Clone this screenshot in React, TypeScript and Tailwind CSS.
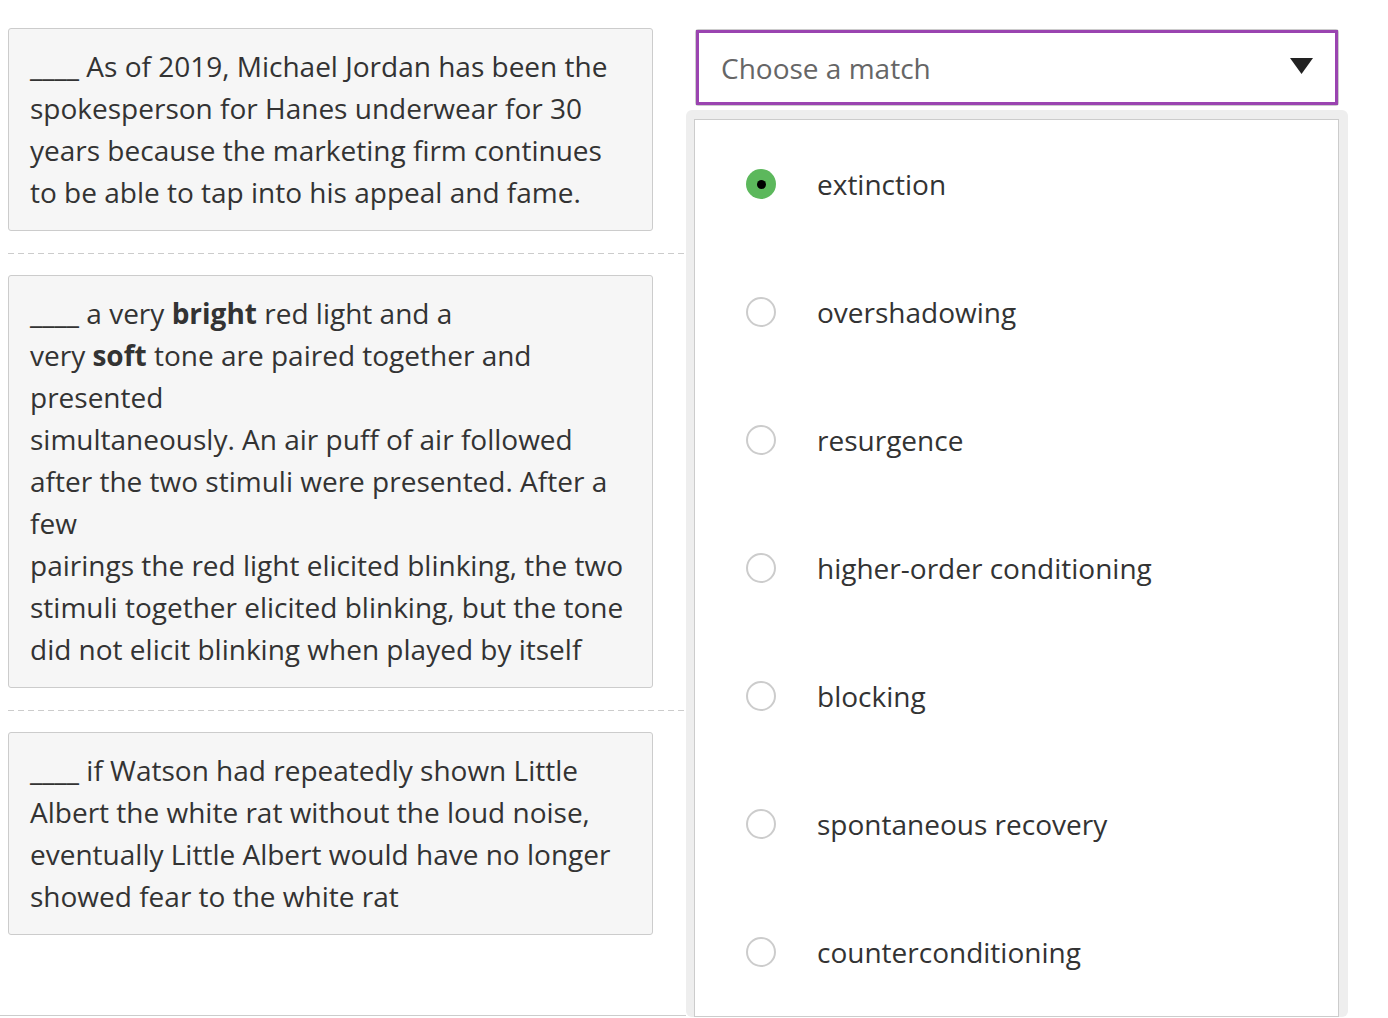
import React from "react"

const options = [
    "extinction",
    "overshadowing",
    "resurgence",
    "higher-order conditioning",
    "blocking",
    "spontaneous recovery",
    "counterconditioning",
]

function Card({ children }: { children: React.ReactNode }) {
    return (
        <div className="ml-2 w-[645px] whitespace-nowrap rounded-[3px] border border-[#cccccc] bg-[#f6f6f6] pl-[21px] pr-4 pt-[16px] pb-[17px] text-[28px] leading-[42px] text-[#333333]">
            {children}
        </div>
    )
}

function Divider() {
    return (
        <div className="ml-2 mt-[22px] mb-[21px] h-px w-[683px] bg-[linear-gradient(to_right,#cccccc_60%,transparent_60%)] bg-[length:10px_1px] bg-repeat-x" />
    )
}

export default function App() {
    return (
        <div className="h-screen overflow-hidden bg-white font-['Open_Sans',sans-serif] text-[#333333]">
            <div className="flex pt-[28px]">
                {/* left column: statements */}
                <div className="w-[686px] shrink-0">
                    <Card>
                        ____ As of 2019, Michael Jordan has been the
                        <br />
                        spokesperson for Hanes underwear for 30
                        <br />
                        years because the marketing firm continues
                        <br />
                        to be able to tap into his appeal and fame.
                    </Card>
                    <Divider />
                    <Card>
                        ____ a very <b className="font-bold">bright</b> red light and a
                        <br />
                        very <b className="font-bold">soft</b> tone are paired together and
                        <br />
                        presented
                        <br />
                        simultaneously. An air puff of air followed
                        <br />
                        after the two stimuli were presented. After a
                        <br />
                        few
                        <br />
                        pairings the red light elicited blinking, the two
                        <br />
                        stimuli together elicited blinking, but the tone
                        <br />
                        did not elicit blinking when played by itself
                    </Card>
                    <Divider />
                    <Card>
                        ____ if Watson had repeatedly shown Little
                        <br />
                        Albert the white rat without the loud noise,
                        <br />
                        eventually Little Albert would have no longer
                        <br />
                        showed fear to the white rat
                    </Card>
                    <div className="mt-[80px] h-px w-[686px] bg-[#cccccc]" />
                </div>

                {/* right column: select with open menu */}
                <div className="w-[662px] shrink-0">
                    <div className="ml-[9px] mt-px w-[644px] rounded-[3px] border border-[#cccccc]">
                        <div className="flex h-[75px] items-center justify-between border-[3px] border-[#9a44b0] pl-[22px] pr-[22px]">
                            <span className="text-[28px] text-[#666666]">Choose a match</span>
                            <svg width="23" height="16" viewBox="0 0 23 16" className="mb-[4px]">
                                <polygon points="0,0 23,0 11.5,16" fill="#222222" />
                            </svg>
                        </div>
                    </div>
                    <div className="mt-[4px] rounded-[6px] bg-[#eeeeee] pl-[8px] pr-[9px] pt-[9px]">
                        <div className="border border-[#cccccc] bg-white">
                            {options.map((o, i) => (
                                <div key={o} className="flex h-[128px] items-center pl-[51px]">
                                    {i === 0 ? (
                                        <span className="flex h-[30px] w-[30px] items-center justify-center rounded-full bg-[#5cb85c]">
                                            <span className="h-[9px] w-[9px] rounded-full bg-black" />
                                        </span>
                                    ) : (
                                        <span className="h-[30px] w-[30px] rounded-full border-2 border-[#cccccc] bg-white" />
                                    )}
                                    <span className="ml-[41px] text-[28px] text-[#333333]">{o}</span>
                                </div>
                            ))}
                        </div>
                    </div>
                </div>
            </div>
        </div>
    )
}
